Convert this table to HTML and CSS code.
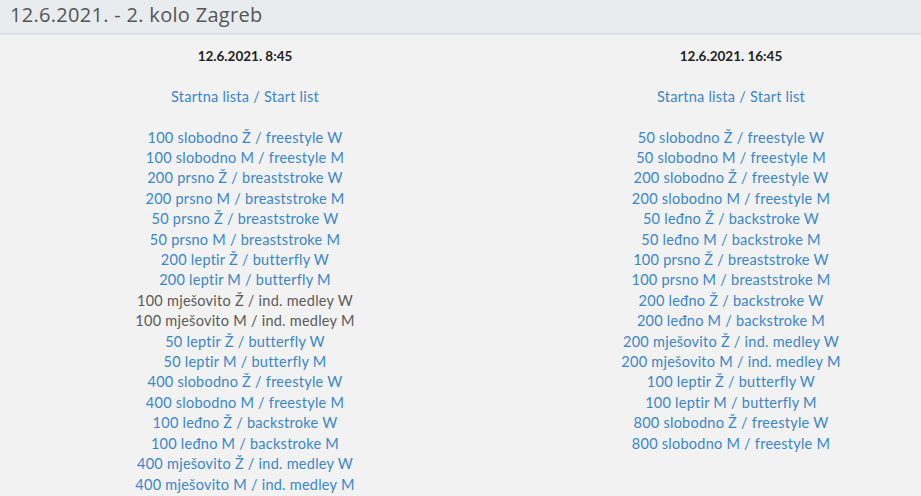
FILE: index.html
```html
<!DOCTYPE html>
<html lang="hr">
<head>
<meta charset="utf-8">
<title>12.6.2021. - 2. kolo Zagreb</title>
<link rel="stylesheet" href="styles.css">
</head>
<body>
<header class="page-head">
  <h1 class="title">12.6.2021. - 2. kolo Zagreb</h1>
</header>
<main class="sessions">
  <section class="session">
    <p class="when">12.6.2021. 8:45</p>
    <p class="block"><a href="#">Startna lista / Start list</a></p>
    <ul class="events">
      <li><a href="#">100 slobodno Ž / freestyle W</a></li>
      <li><a href="#">100 slobodno M / freestyle M</a></li>
      <li><a href="#">200 prsno Ž / breaststroke W</a></li>
      <li><a href="#">200 prsno M / breaststroke M</a></li>
      <li><a href="#">50 prsno Ž / breaststroke W</a></li>
      <li><a href="#">50 prsno M / breaststroke M</a></li>
      <li><a href="#">200 leptir Ž / butterfly W</a></li>
      <li><a href="#">200 leptir M / butterfly M</a></li>
      <li class="plain">100 mješovito Ž / ind. medley W</li>
      <li class="plain">100 mješovito M / ind. medley M</li>
      <li><a href="#">50 leptir Ž / butterfly W</a></li>
      <li><a href="#">50 leptir M / butterfly M</a></li>
      <li><a href="#">400 slobodno Ž / freestyle W</a></li>
      <li><a href="#">400 slobodno M / freestyle M</a></li>
      <li><a href="#">100 leđno Ž / backstroke W</a></li>
      <li><a href="#">100 leđno M / backstroke M</a></li>
      <li><a href="#">400 mješovito Ž / ind. medley W</a></li>
      <li><a href="#">400 mješovito M / ind. medley M</a></li>
    </ul>
  </section>
  <section class="session">
    <p class="when">12.6.2021. 16:45</p>
    <p class="block"><a href="#">Startna lista / Start list</a></p>
    <ul class="events">
      <li><a href="#">50 slobodno Ž / freestyle W</a></li>
      <li><a href="#">50 slobodno M / freestyle M</a></li>
      <li><a href="#">200 slobodno Ž / freestyle W</a></li>
      <li><a href="#">200 slobodno M / freestyle M</a></li>
      <li><a href="#">50 leđno Ž / backstroke W</a></li>
      <li><a href="#">50 leđno M / backstroke M</a></li>
      <li><a href="#">100 prsno Ž / breaststroke W</a></li>
      <li><a href="#">100 prsno M / breaststroke M</a></li>
      <li><a href="#">200 leđno Ž / backstroke W</a></li>
      <li><a href="#">200 leđno M / backstroke M</a></li>
      <li><a href="#">200 mješovito Ž / ind. medley W</a></li>
      <li><a href="#">200 mješovito M / ind. medley M</a></li>
      <li><a href="#">100 leptir Ž / butterfly W</a></li>
      <li><a href="#">100 leptir M / butterfly M</a></li>
      <li><a href="#">800 slobodno Ž / freestyle W</a></li>
      <li><a href="#">800 slobodno M / freestyle M</a></li>
    </ul>
  </section>
</main>
</body>
</html>
```

FILE: styles.css
```css
html, body {
  margin: 0;
  padding: 0;
  background: #f2f2f2;
}
body {
  font-family: Lato, "Open Sans", sans-serif;
  color: #555;
}
.page-head {
  background: #e9ecef;
  border-bottom: 2px solid #dde0e6;
  height: 33px;
  padding: 0 10px;
}
.title {
  margin: 0;
  font-family: "Open Sans", sans-serif;
  font-weight: 400;
  font-size: 20px;
  line-height: 30px;
  color: #555;
  letter-spacing: 0.3px;
}
.sessions {
  display: grid;
  grid-template-columns: 486px 380px;
  column-gap: 53px;
  padding: 11px 0 0 2px;
}
.session {
  text-align: center;
  font-size: 14.5px;
  line-height: 20.4px;
  letter-spacing: 0.25px;
}
.when {
  margin: 0 0 20.4px;
  font-weight: 700;
  color: #222;
  font-size: 13.5px;
  letter-spacing: 0;
}
.block {
  margin: 0 0 20.4px;
}
.events {
  list-style: none;
  margin: 0;
  padding: 0;
}
a {
  color: #3a86c8;
  text-decoration: none;
}
.plain {
  color: #5a5a5a;
}
```
